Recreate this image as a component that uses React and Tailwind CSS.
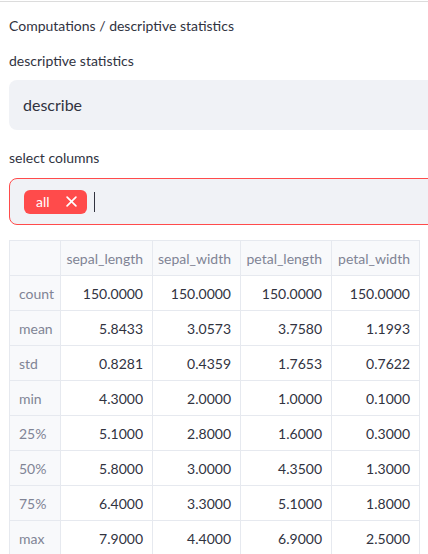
import React from 'react';

const cols = ['sepal_length', 'sepal_width', 'petal_length', 'petal_width'];
const rows = [
    ['count', '150.0000', '150.0000', '150.0000', '150.0000'],
    ['mean', '5.8433', '3.0573', '3.7580', '1.1993'],
    ['std', '0.8281', '0.4359', '1.7653', '0.7622'],
    ['min', '4.3000', '2.0000', '1.0000', '0.1000'],
    ['25%', '5.1000', '2.8000', '1.6000', '0.3000'],
    ['50%', '5.8000', '3.0000', '4.3500', '1.3000'],
    ['75%', '6.4000', '3.3000', '5.1000', '1.8000'],
    ['max', '7.9000', '4.4000', '6.9000', '2.5000'],
];
const widths = ['w-[51px]', 'w-[92px]', 'w-[88px]', 'w-[91px]', 'w-[88px]'];

const App = () => {
    return (
        <div className="w-[428px] h-[554px] overflow-hidden bg-white text-[#31333f] font-['Lato','Noto_Sans',sans-serif]">
            <div className="h-[2px] border-b border-[#dcdcdc]" />
            <div className="pl-[9px]">
                <p className="text-[14px] leading-5 mt-[14px]">Computations / descriptive statistics</p>

                <p className="text-[14px] leading-5 mt-[15px]">descriptive statistics</p>
                <div className="mt-[9px] h-[50px] w-[440px] rounded-lg bg-[#f0f2f6] flex items-center pl-[14px] text-[16px]">
                    describe
                </div>

                <p className="text-[14px] leading-5 mt-[18px]">select columns</p>
                <div className="mt-[10px] h-[47px] w-[440px] rounded-lg bg-[#f0f2f6] border border-[#ff4b4b] flex items-center pl-[14px] gap-[7px]">
                    <span className="h-[24px] rounded-md bg-[#ff4b4b] text-white text-[14px] flex items-center pl-[12px] pr-[10px] gap-[16px]">
                        all
                        <svg width="11" height="11" viewBox="0 0 10 10" stroke="white" strokeWidth="1.5" strokeLinecap="round">
                            <path d="M1 1L9 9M9 1L1 9" />
                        </svg>
                    </span>
                    <span className="w-px h-[20px] bg-[#31333f]" />
                </div>

                <table className="mt-[15px] table-fixed border-collapse text-[14px] w-[410px]">
                    <thead>
                        <tr className="h-[35px] bg-[#f8f9fb]">
                            {['', ...cols].map((c, i) => (
                                <th key={i} className={`${widths[i]} border border-[#e6e9ef] font-normal text-[#808495] text-right pr-[9px]`}>{c}</th>
                            ))}
                        </tr>
                    </thead>
                    <tbody>
                        {rows.map((r) => (
                            <tr key={r[0]} className="h-[35px]">
                                {r.map((v, i) => (
                                    <td key={i} className={`border border-[#e6e9ef] ${i === 0 ? 'bg-[#f8f9fb] text-[#808495] text-left pl-[9px]' : 'text-right pr-[9px]'}`}>{v}</td>
                                ))}
                            </tr>
                        ))}
                    </tbody>
                </table>
            </div>
        </div>
    );
};

export default App;
